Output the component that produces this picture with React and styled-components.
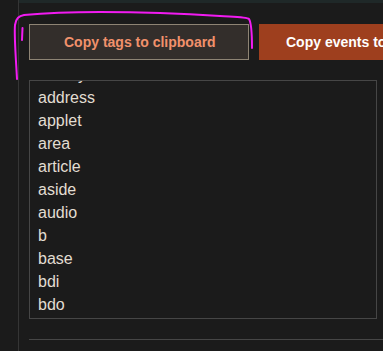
import React from 'react';
import styled, { createGlobalStyle } from 'styled-components';

const Global = createGlobalStyle`
  html, body {
    margin: 0;
    padding: 0;
    background: #1b1b1b;
    font-family: "Liberation Sans", Arial, sans-serif;
    overflow: hidden;
  }
`

const Page = styled.div`
  position: relative;
  display: flex;
  height: 351px;
  width: 383px;
  overflow: hidden;
`

const Gutter = styled.div`
  width: 18px;
  flex: none;
  border-right: 1px solid #353535;
`

const Main = styled.div`
  flex: 1;
  min-width: 0;
  display: flex;
  flex-direction: column;
`

const TopStrip = styled.div`
  height: 3px;
  background: #1f2828;
`

const Content = styled.div`
  padding: 21px 0 0 10px;
`

const Toolbar = styled.div`
  display: flex;
  gap: 10px;
  white-space: nowrap;
`

const Button = styled.button`
  flex: none;
  height: 36px;
  box-sizing: border-box;
  width: ${p => p.$width}px;
  font-family: "Liberation Sans", Arial, sans-serif;
  font-size: 14px;
  font-weight: bold;
  text-align: left;
  padding: 0 0 0 ${p => p.$pad}px;
  border: 1px solid ${p => (p.$primary ? '#9e3f1e' : '#8e8474')};
  background: ${p => (p.$primary ? '#9e3f1e' : '#332e2b')};
  color: ${p => (p.$primary ? '#ffffff' : '#f1916b')};
  cursor: pointer;
`

const ListBox = styled.div`
  margin-top: 20px;
  width: 348px;
  height: 239px;
  box-sizing: border-box;
  border: 1px solid #464646;
  overflow: hidden;
`

const TagList = styled.ul`
  list-style: none;
  margin: -18px 0 0 0;
  padding: 0 0 0 8px;
`

const Tag = styled.li`
  font-size: 16px;
  line-height: 23px;
  color: #e2ddd2;
`

const Rule = styled.div`
  margin-top: 20px;
  height: 1px;
  background: #464646;
`

const Scribble = styled.svg`
  position: absolute;
  left: 0;
  top: 0;
  pointer-events: none;
`

const tags = ['acronym', 'address', 'applet', 'area', 'article', 'aside', 'audio', 'b', 'base', 'bdi', 'bdo', 'big', 'blink']

export default function App() {
	return (
		<Page>
			<Global />
			<Gutter />
			<Main>
				<TopStrip />
				<Content>
					<Toolbar>
						<Button $width={220} $pad={34}>Copy tags to clipboard</Button>
						<Button $width={180} $pad={26} $primary>Copy events to clipboard</Button>
					</Toolbar>
					<ListBox>
						<TagList>
							{tags.map(t => <Tag key={t}>{t}</Tag>)}
						</TagList>
					</ListBox>
					<Rule />
				</Content>
			</Main>
			<Scribble width="383" height="351" viewBox="0 0 383 351">
				<path
					d="M17 79 C16 60 14 35 15 25 C16 18 19 16 24 15 C45 13 70 12 100 12 C140 12 190 14 220 16 C238 17 247 17 249 19 C252 24 252 36 252 48"
					fill="none"
					stroke="#f21bf2"
					strokeWidth="2"
					strokeLinecap="round"
				/>
				<path d="M22.5 28 L22 40" fill="none" stroke="#f21bf2" strokeWidth="2" strokeLinecap="round" />
			</Scribble>
		</Page>
	);
}
